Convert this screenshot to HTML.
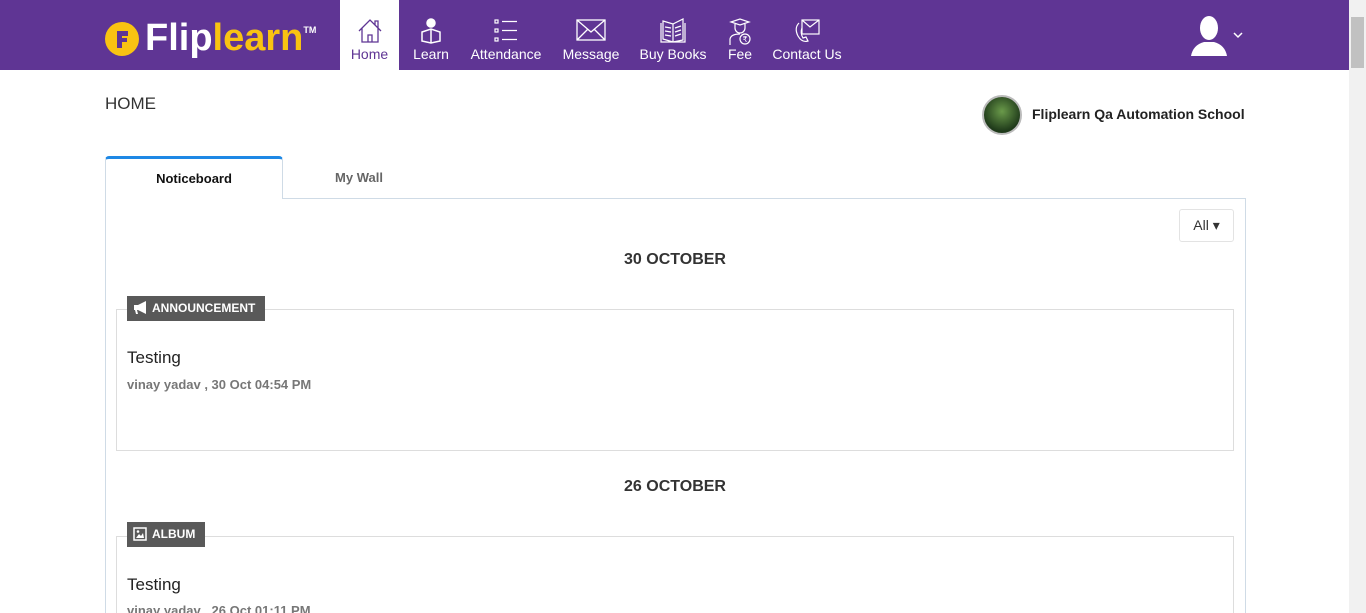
<!DOCTYPE html>
<html style="margin:0;width:1366px;height:613px;overflow:hidden"><head><style>
body{margin:0;width:1366px;height:613px;overflow:hidden;font-family:"Liberation Sans",sans-serif;background:#fff;position:relative}
.hdr{position:absolute;left:0;top:0;width:1349px;height:70px;background:#5f3594}
.sb{position:absolute;left:1349px;top:0;width:17px;height:613px;background:#f1f1f1}
.sb div{position:absolute;left:2px;top:17px;width:13px;height:51px;background:#c1c1c1}
.nav{position:absolute;top:0;height:70px;color:#fff;font-size:14px;text-align:center}
.nav span{position:absolute;bottom:8px;left:0;right:0;white-space:nowrap}
.nav svg{position:absolute;top:18px;left:50%;transform:translateX(-50%)}
.abs{position:absolute}
.card{position:absolute;left:116px;width:1116px;border:1px solid #ddd}
.lbl{position:absolute;left:127px;height:25px;background:#595959;color:#fff;font-size:12px;font-weight:bold;line-height:25px;padding:0 10px 0 25px}
h3{position:absolute;margin:0;font-size:16px;font-weight:bold;color:#333;width:1140px;left:105px;text-align:center}
.t{position:absolute;left:127px;font-size:17px;color:#222}
.m{position:absolute;left:127px;font-size:13px;font-weight:bold;color:#777}
</style></head><body>
<div class="hdr"></div>
<div class="sb"><div></div></div>
<div class="abs" style="left:105px;top:22px;width:34px;height:34px;border-radius:50%;background:#f9c312"></div>
<svg class="abs" style="left:105px;top:22px" width="34" height="34" viewBox="0 0 34 34"><path d="M12 9 H23 V14 H17 V16 H22 V20 H17 V26 H12Z" fill="#5f3594"/></svg>
<div class="abs" style="left:145px;top:17px;font:bold 38px 'Liberation Sans';letter-spacing:0"><span style="color:#fff">Flip</span><span style="color:#f9c312">learn</span><span style="color:#fff;font-size:9px;vertical-align:top;position:relative;top:8px">TM</span></div>
<div class="nav" style="left:340px;width:59px;background:#fff;color:#5f3594"><svg width="26" height="26" viewBox="0 0 26 26" fill="none" stroke="#5f3594" stroke-width="1.3"><path d="M2 13 L13 2 L24 13 M5 10 V24 H21 V10 M11 24 V17 H15 V24 M18 7 V3 H21 V10"/></svg><span>Home</span></div>
<div class="nav" style="left:408px;width:46px"><svg width="26" height="26" viewBox="0 0 26 26" fill="none" stroke="#fff" stroke-width="1.5"><circle cx="13" cy="5" r="4" fill="#fff"/><path d="M4 14 L13 11 L22 14 V23 L13 25 L4 23Z M13 11 V25"/></svg><span>Learn</span></div>
<div class="nav" style="left:466px;width:80px"><svg width="26" height="26" viewBox="0 0 26 26" fill="none" stroke="#fff" stroke-width="1.2"><rect x="2" y="2" width="3" height="3"/><rect x="2" y="11" width="3" height="3"/><rect x="2" y="20" width="3" height="3"/><path d="M9 3.5H24M9 12.5H24M9 21.5H24"/></svg><span>Attendance</span></div>
<div class="nav" style="left:560px;width:62px"><svg width="30" height="24" viewBox="0 0 30 24" fill="none" stroke="#fff" stroke-width="1.3"><rect x="1" y="2" width="28" height="20"/><path d="M1 2 L15 14 L29 2 M1 22 L12 11 M29 22 L18 11"/></svg><span>Message</span></div>
<div class="nav" style="left:636px;width:74px"><svg width="28" height="26" viewBox="0 0 28 26" fill="none" stroke="#fff" stroke-width="1.2"><path d="M2 5 V24 H26 V5 M4 3 L14 6 L24 1 V22 L14 24 L4 21Z M14 6 V24 M6 9 L12 10 M6 13 L12 14 M6 17 L12 18 M16 10 L22 8 M16 14 L22 12 M16 18 L22 16"/></svg><span>Buy Books</span></div>
<div class="nav" style="left:723px;width:34px"><svg width="26" height="28" viewBox="0 0 26 28" fill="none" stroke="#fff" stroke-width="1.2"><path d="M4 4 L13 1 L22 4 L13 7Z M8 6 V10 A5 5 0 0 0 18 10 V6 M3 27 V21 Q4 16 13 16"/><circle cx="18" cy="21" r="5"/><text x="15.5" y="24" font-size="8" fill="#fff" stroke="none">₹</text></svg><span>Fee</span></div>
<div class="nav" style="left:771px;width:72px"><svg width="28" height="26" viewBox="0 0 28 26" fill="none" stroke="#fff" stroke-width="1.2"><rect x="9" y="2" width="17" height="14"/><path d="M9 2 L17 9 L26 2 M6 5 Q1 10 5 18 Q9 25 15 23 L13 19 L10 20 Q7 15 9 10"/></svg><span>Contact Us</span></div>
<svg class="abs" style="left:1190px;top:15px" width="38" height="42" viewBox="0 0 38 42"><ellipse cx="19" cy="13" rx="9" ry="12" fill="#fff"/><path d="M1 41 Q3 30 14 27 L24 27 Q35 30 37 41Z" fill="#fff"/></svg>
<svg class="abs" style="left:1233px;top:31px" width="10" height="8"><path d="M1 2 L5 6 L9 2" stroke="#fff" fill="none" stroke-width="1.5"/></svg>
<div class="abs" style="left:105px;top:94px;font-size:17px;color:#333">HOME</div>
<div class="abs" style="left:982px;top:95px;width:36px;height:36px;border-radius:50%;border:2px solid #bbb;background:radial-gradient(circle at 50% 40%,#6a9a4a,#1f3a1a 70%)"></div>
<div class="abs" style="left:1032px;top:106px;font-size:14px;font-weight:bold;color:#222">Fliplearn Qa Automation School</div>
<div class="abs" style="left:105px;top:198px;width:1139px;height:420px;border:1px solid #cfdbe6"></div>
<div class="abs" style="left:105px;top:156px;width:178px;height:43px;background:#fff;border:1px solid #cfdbe6;border-top:3px solid #1e88e5;border-bottom:none;border-radius:4px 4px 0 0;box-sizing:border-box;text-align:center;line-height:40px;font-size:13px;font-weight:bold;color:#111">Noticeboard</div>
<div class="abs" style="left:284px;top:158px;width:150px;text-align:center;line-height:40px;font-size:13px;font-weight:bold;color:#666">My Wall</div>
<div class="abs" style="left:1179px;top:209px;width:53px;height:31px;border:1px solid #e3e3e3;border-radius:3px;font-size:14px;color:#333;line-height:31px;text-align:center">All ▾</div>
<h3 style="top:251px">30 OCTOBER</h3>
<div class="card" style="top:309px;height:140px"></div>
<div class="lbl" style="top:296px">ANNOUNCEMENT</div>
<svg class="abs" style="left:133px;top:301px" width="16" height="14" viewBox="0 0 16 14"><path d="M1 4 H5 L13 0 V13 L5 9 H4 L5 13 H3 L2 9 H1Z" fill="#fff"/></svg>
<div class="t" style="top:348px">Testing</div>
<div class="m" style="top:377px">vinay yadav , 30 Oct 04:54 PM</div>
<h3 style="top:478px">26 OCTOBER</h3>
<div class="card" style="top:536px;height:100px"></div>
<div class="lbl" style="top:522px">ALBUM</div>
<svg class="abs" style="left:133px;top:527px" width="14" height="14" viewBox="0 0 14 14"><rect x="1" y="1" width="12" height="12" fill="none" stroke="#fff" stroke-width="1.5"/><path d="M3 11 L6 7 L8 9 L10 6 L11 11Z" fill="#fff"/><circle cx="5" cy="4.5" r="1.3" fill="#fff"/></svg>
<div class="t" style="top:575px">Testing</div>
<div class="m" style="top:603px">vinay yadav , 26 Oct 01:11 PM</div>
</body></html>
